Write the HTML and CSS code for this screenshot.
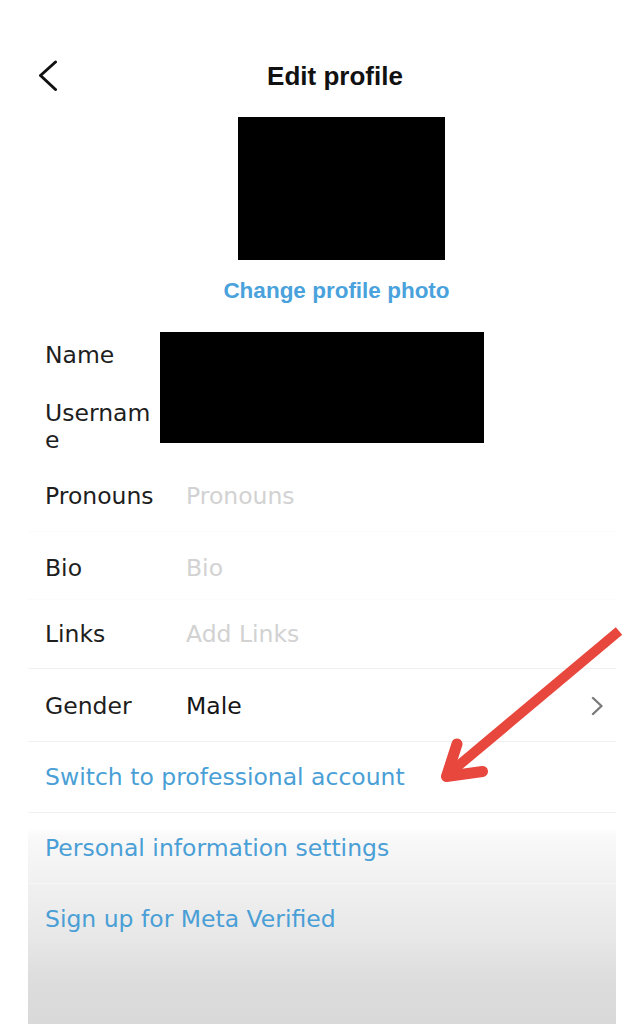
FILE: index.html
```html
<!DOCTYPE html>
<html lang="en">
<head>
<meta charset="utf-8">
<title>Edit profile</title>
<link rel="stylesheet" href="styles.css">
</head>
<body>
<div class="screen">
  <div class="column">
    <header class="topbar">
      <svg class="back" width="18" height="32" viewBox="0 0 18 32" aria-hidden="true">
        <polyline points="16.5,2 1.5,15.5 16.5,29.5" fill="none" stroke="#111" stroke-width="3" stroke-linecap="round" stroke-linejoin="round"/>
      </svg>
      <h1 class="title">Edit profile</h1>
    </header>

    <div class="photo"></div>
    <div class="change-photo">Change profile photo</div>

    <div class="identity">
      <div class="label id-name">Name</div>
      <div class="redact"></div>
      <div class="label id-user">Username</div>
    </div>

    <div class="row row-pronouns row-faint">
      <span class="label">Pronouns</span>
      <span class="placeholder">Pronouns</span>
    </div>
    <div class="row row-bio row-faint">
      <span class="label">Bio</span>
      <span class="placeholder">Bio</span>
    </div>
    <div class="row row-links">
      <span class="label">Links</span>
      <span class="placeholder">Add Links</span>
    </div>
    <div class="row row-gender">
      <span class="label">Gender</span>
      <span class="value">Male</span>
      <svg class="chev" width="12" height="20" viewBox="0 0 12 20" aria-hidden="true">
        <polyline points="2,2 10.5,10 2,18" fill="none" stroke="#7a7a7a" stroke-width="2.4" stroke-linecap="round" stroke-linejoin="round"/>
      </svg>
    </div>
    <div class="row link-row">Switch to professional account</div>
    <div class="row link-row on-gray">Personal information settings</div>
    <div class="row link-row last">Sign up for Meta Verified</div>
  </div>

  <svg class="arrow" width="642" height="1024" viewBox="0 0 642 1024" aria-hidden="true">
    <line x1="619" y1="631" x2="452" y2="771" stroke="#e8473d" stroke-width="10" stroke-linecap="butt"/>
    <polyline points="457,744 446.5,776.5 482.5,771.5" fill="none" stroke="#e8473d" stroke-width="11" stroke-linecap="round" stroke-linejoin="round"/>
  </svg>
</div>
</body>
</html>
```

FILE: styles.css
```css
html, body {
  margin: 0;
  padding: 0;
  height: 1024px;
  overflow: hidden;
  background: #ffffff;
}

.screen {
  position: relative;
  width: 642px;
  height: 1024px;
}

.column {
  margin: 0 26px 0 28px;
  height: 1024px;
  box-sizing: border-box;
  padding-top: 50px;
  font-family: "DejaVu Sans", "Liberation Sans", sans-serif;
  font-size: 23.5px;
  color: #1e1e1e;
  background: linear-gradient(to bottom,
    #ffffff 0,
    #ffffff 828px,
    #f9f9f9 836px,
    #f1f1f1 880px,
    #e7e7e7 940px,
    #dddddd 978px,
    #d9d9d9 1024px);
}

.topbar {
  display: flex;
  align-items: center;
  height: 52px;
  padding: 0 3px 0 11px;
}

.back {
  display: block;
  flex: none;
}

.title {
  flex: 1;
  margin: 0;
  text-align: center;
  font-family: "Liberation Sans", Arial, sans-serif;
  font-weight: 700;
  font-size: 26px;
  color: #111111;
}

.photo {
  width: 207px;
  height: 143px;
  margin: 15px 0 0 210px;
  background: #000000;
}

.change-photo {
  margin-top: 16px;
  padding-left: 29px;
  text-align: center;
  font-family: "Liberation Sans", Arial, sans-serif;
  font-weight: 700;
  font-size: 22.5px;
  line-height: 30px;
  color: #4aa2dc;
}

.identity {
  display: grid;
  grid-template-columns: 115px 324px;
  grid-template-rows: auto auto;
  margin-top: 26px;
  padding-left: 17px;
  line-height: 27px;
}

.id-name {
  grid-column: 1;
  grid-row: 1;
  margin-top: 10px;
}

.id-user {
  grid-column: 1;
  grid-row: 2;
  margin-top: 31px;
  word-break: break-all;
}

.redact {
  grid-column: 2;
  grid-row: 1 / span 2;
  height: 111px;
  background: #000000;
}

.row {
  display: flex;
  align-items: center;
  padding: 19px 13px 19px 17px;
  line-height: 32px;
  border-bottom: 1px solid #f0f0f0;
}

.row .label {
  width: 141px;
  flex: none;
}

.row-faint {
  border-bottom-color: #fbfbfb;
}

.row-pronouns {
  margin-top: 7px;
}

.row-bio {
  padding-top: 20px;
  padding-bottom: 15px;
}

.row-links {
  padding-top: 18px;
  padding-bottom: 18px;
}

.row-gender {
  padding-top: 21px;
}

.placeholder {
  color: #d2d2d2;
}

.value {
  flex: 1;
  color: #151515;
}

.chev {
  display: block;
  flex: none;
}

.link-row {
  color: #4a9fd6;
}

.link-row.on-gray {
  border-bottom-color: #f6f6f6;
}

.link-row.last {
  border-bottom: none;
}

.arrow {
  position: absolute;
  left: 0;
  top: 0;
  pointer-events: none;
}
```
